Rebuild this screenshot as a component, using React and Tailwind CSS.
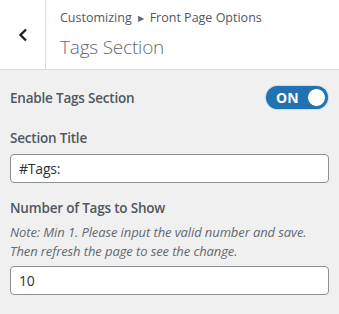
import React from "react";

const font = { fontFamily: '"Open Sans", "Noto Sans", sans-serif' };

const Label = ({ children }) => (
  <div className="text-[13.5px] font-semibold leading-[20px] tracking-[-0.2px] text-[#50575e]">
    {children}
  </div>
);

const TextInput = ({ value }) => (
  <input
    readOnly
    value={value}
    className="w-full h-[29px] rounded-[4px] border border-[#8c8f94] bg-white px-[8px] text-[14px] tracking-[-0.2px] text-[#2c3338] outline-none"
  />
);

export default function App() {
  return (
    <div
      className="w-[339px] h-[314px] bg-[#f0f0f1] overflow-hidden"
      style={font}
    >
      {/* header */}
      <div className="flex h-[70px] bg-white border-b border-[#dcdcde]">
        <button className="w-[46px] shrink-0 flex items-center justify-center border-r border-[#dcdcde]">
          <svg width="12" height="16" viewBox="0 0 12 16">
            <path
              d="M9 2.5 L3.5 8 L9 13.5"
              fill="none"
              stroke="#1d2327"
              strokeWidth="2.4"
            />
          </svg>
        </button>
        <div className="pl-[14px] pt-[9px]">
          <div className="flex items-center text-[12.5px] leading-[18px] text-[#50575e]">
            Customizing
            <span className="mx-[6px] text-[8px] text-[#646970]">▶</span>
            Front Page Options
          </div>
          <div className="mt-[8px] text-[19px] leading-[24px] font-light tracking-[-0.2px] text-[#646970]">
            Tags Section
          </div>
        </div>
      </div>

      {/* body */}
      <div className="px-[10px] pt-[16px]">
        <div className="flex items-center justify-between pr-[1px]">
          <Label>Enable Tags Section</Label>
          <div className="relative flex items-center w-[62px] h-[23px] rounded-full bg-[#2271b1] shadow-[0_0_0_1px_#c5dcef]">
            <span className="pl-[10px] text-[14px] font-bold leading-none text-white">
              ON
            </span>
            <span className="absolute right-[2px] top-[2px] w-[19px] h-[19px] rounded-full bg-white border border-[#2271b1]" />
          </div>
        </div>

        <div className="mt-[19px]">
          <Label>Section Title</Label>
        </div>
        <div className="mt-[6px]">
          <TextInput value="#Tags:" />
        </div>

        <div className="mt-[15px]">
          <Label>Number of Tags to Show</Label>
        </div>
        <div className="mt-[5px] text-[13px] italic leading-[19px] tracking-[-0.1px] text-[#646970]">
          Note: Min 1. Please input the valid number and save.
          <br />
          Then refresh the page to see the change.
        </div>
        <div className="mt-[5px]">
          <TextInput value="10" />
        </div>
      </div>
    </div>
  );
}
